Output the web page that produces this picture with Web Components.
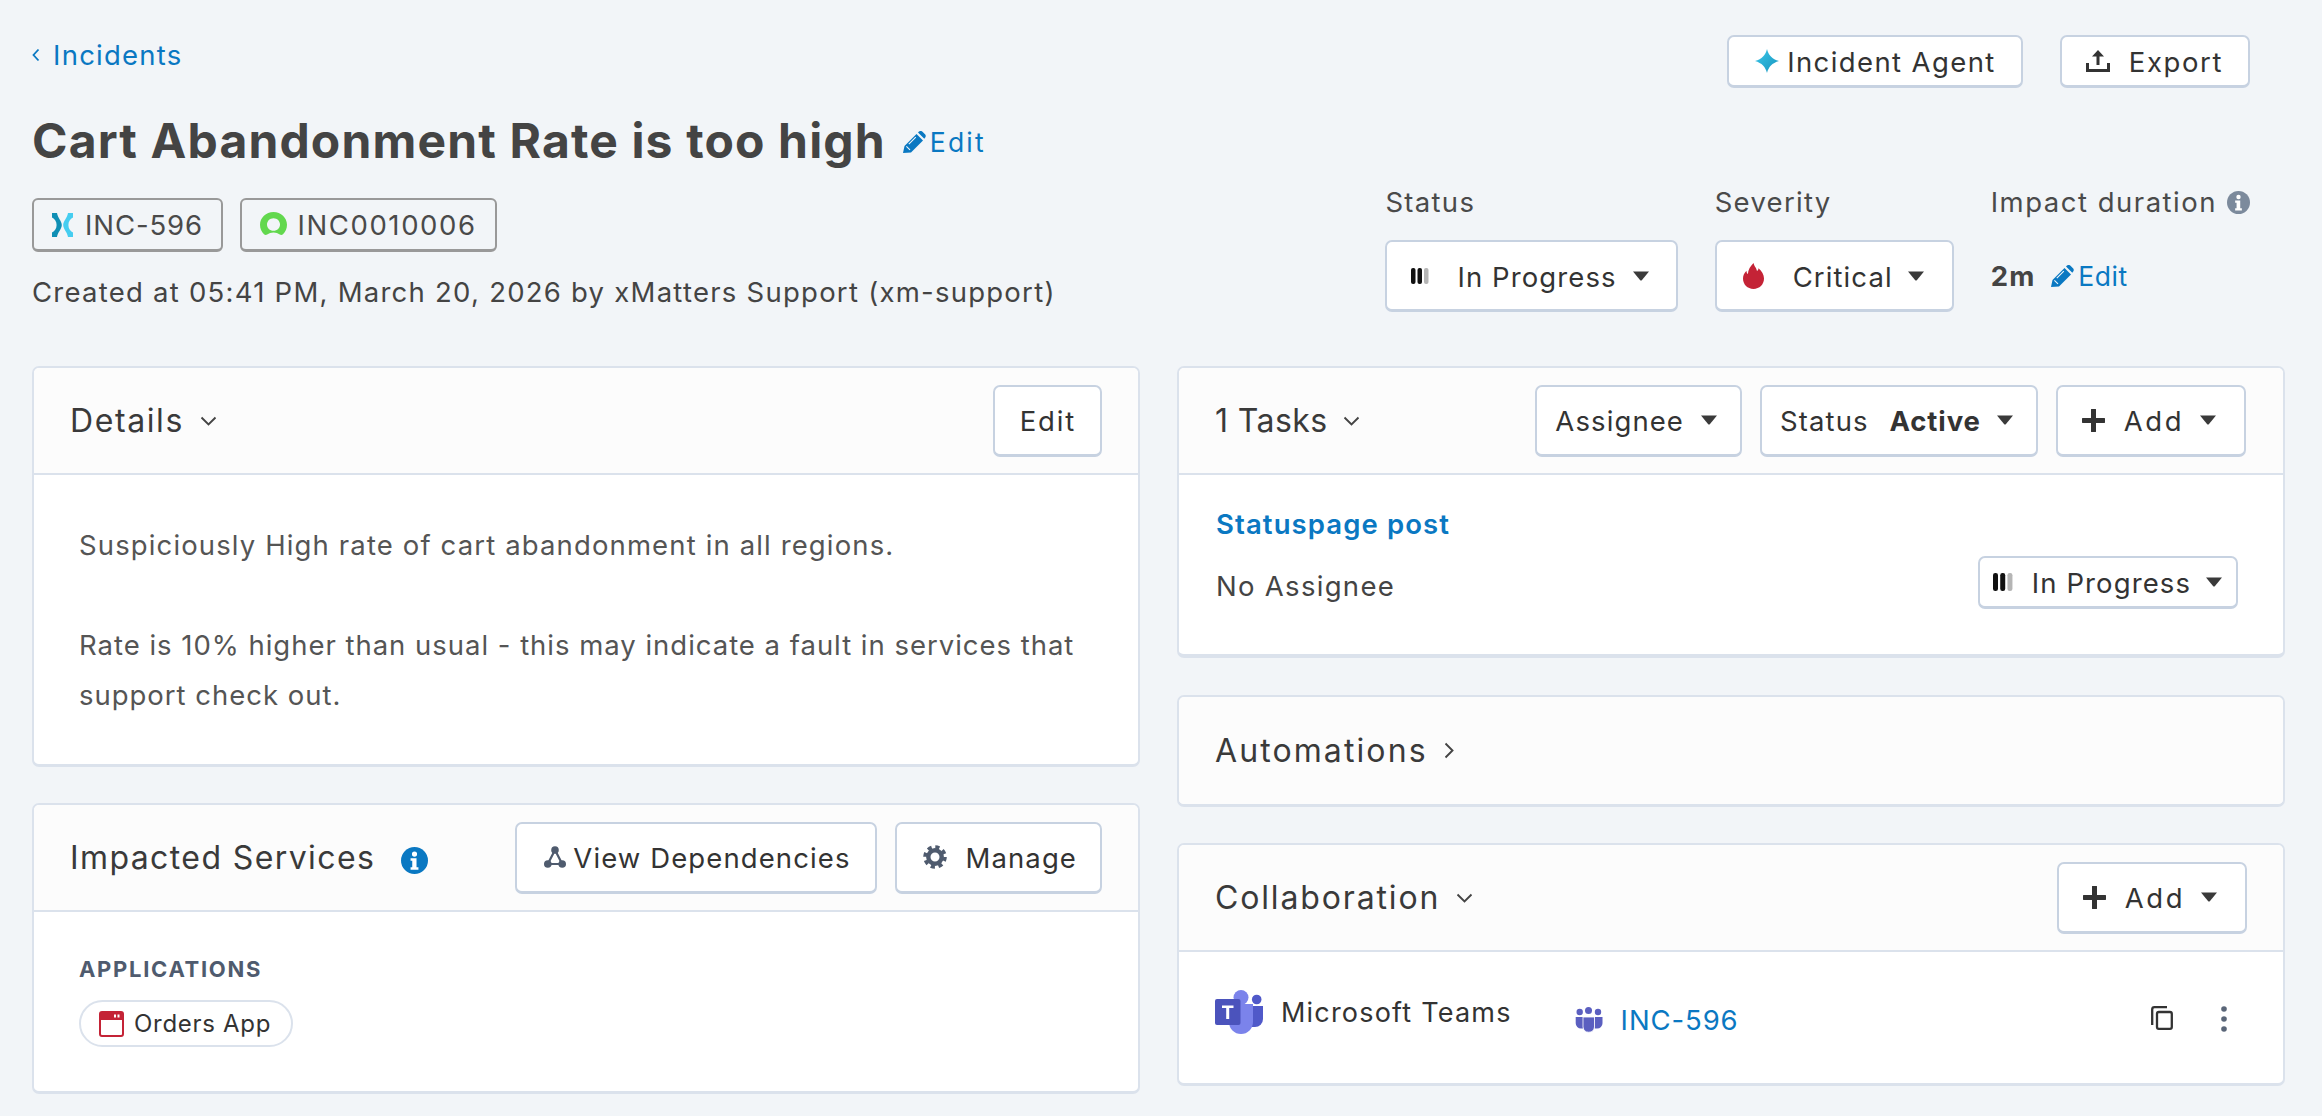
<!DOCTYPE html>
<html lang="en">
<head>
<meta charset="utf-8">
<title>Cart Abandonment Rate is too high</title>
<style>
  html, body { margin: 0; background: #f2f5f8; overflow: hidden; }
  body { font-family: Inter, "Liberation Sans", sans-serif; color: #444; letter-spacing: 1.1px; -webkit-font-smoothing: antialiased; }
</style>
</head>
<body>
<inc-page>
  <inc-back slot="top-left" href="#">Incidents</inc-back>
  <inc-title slot="top-left">Cart Abandonment Rate is too high</inc-title>
  <inc-refs slot="top-left">
    <inc-chip icon="xmatters" w="21" h="24" style="--ls:.9px">INC-596</inc-chip>
    <inc-chip icon="snow" w="27" h="25" style="--ls:1.6px;--gap:10px">INC0010006</inc-chip>
  </inc-refs>
  <inc-created slot="top-left">Created at 05:41 PM, March 20, 2026 by xMatters Support (xm-support)</inc-created>

  <inc-toolbar slot="top-right">
    <inc-btn h="53" icon="sparkle" iw="24" ih="24" style="--pad-l:26px;--pad-r:25px;--gap:8px;letter-spacing:1.4px">Incident Agent</inc-btn>
    <inc-btn h="53" icon="export" iw="24" ih="22" style="--pad-l:24px;--pad-r:25px;--gap:19px;letter-spacing:1.6px">Export</inc-btn>
  </inc-toolbar>
  <inc-fields slot="top-right">
    <inc-field label="Status"><inc-btn h="72" icon="progress" iw="18" ih="16" caret style="--pad-l:24px;--pad-r:27px;--gap:28px;--caret-gap:16px">In Progress</inc-btn></inc-field>
    <inc-field label="Severity"><inc-btn h="72" icon="flame" iw="21" ih="26" caret style="--pad-l:26px;--pad-r:28px;--gap:29px;--caret-gap:15px">Critical</inc-btn></inc-field>
    <inc-field label="Impact duration" info><inc-duration>2m</inc-duration></inc-field>
  </inc-fields>

  <inc-card slot="left" heading="Details" chevron="down" style="--ls:1.6px">
    <inc-btn slot="actions" h="72" style="--pad-l:25px;--pad-r:24px;letter-spacing:1.8px">Edit</inc-btn>
    <inc-description>
      <p>Suspiciously High rate of cart abandonment in all regions.</p>
      <p style="letter-spacing:.98px">Rate is 10% higher than usual - this may indicate a fault in services that support check out.</p>
    </inc-description>
  </inc-card>

  <inc-card slot="left" heading="Impacted Services" info>
    <inc-btn slot="actions" h="72" icon="deps" iw="22" ih="22" style="--pad-l:27px;--pad-r:24px;--gap:7px">View Dependencies</inc-btn>
    <inc-btn slot="actions" h="72" icon="gear" iw="24" ih="24" style="--pad-l:26px;--pad-r:23px;--gap:19px">Manage</inc-btn>
    <inc-services heading="APPLICATIONS"><inc-pill>Orders App</inc-pill></inc-services>
  </inc-card>

  <inc-card slot="right" heading="1 Tasks" chevron="down" style="--ls:.4px;--bb:4px">
    <inc-btn slot="actions" h="72" caret style="--pad-l:18px;--pad-r:23px;--caret-gap:17px">Assignee</inc-btn>
    <inc-btn slot="actions" h="72" caret style="--pad-l:18px;--pad-r:23px;--caret-gap:16px">Status <b style="margin-left:12px;font-weight:700;letter-spacing:.9px">Active</b></inc-btn>
    <inc-btn slot="actions" h="72" icon="plus" iw="23" ih="23" caret style="--pad-l:24px;--pad-r:28px;--gap:19px;--caret-gap:16px;margin-right:1px;letter-spacing:2.5px">Add</inc-btn>
    <inc-task name="Statuspage post" assignee="No Assignee">
      <inc-btn h="53" icon="progress" iw="20" ih="20" caret style="--pad-l:13px;--pad-r:14px;--gap:19px;--caret-gap:15px">In Progress</inc-btn>
    </inc-task>
  </inc-card>

  <inc-card slot="right" heading="Automations" chevron="right" collapsed style="--ls:2.1px"></inc-card>

  <inc-card slot="right" heading="Collaboration" chevron="down" style="--ls:1.85px">
    <inc-btn slot="actions" h="72" icon="plus" iw="23" ih="23" caret style="--pad-l:24px;--pad-r:28px;--gap:19px;--caret-gap:16px;letter-spacing:2.5px">Add</inc-btn>
    <inc-channel app="Microsoft Teams" name="INC-596"></inc-channel>
  </inc-card>
</inc-page>

<script>
const BLUE = '#0a78c2';

// every icon is a plain svg fragment, viewBox given with it
const ICONS = {
  back: ['0 0 8 14', '<path d="M6.5 1.5 1.5 7l5 5.5" fill="none" stroke="#0a78c2" stroke-width="1.8"/>'],
  down: ['0 0 17 10', '<path d="M1.5 1.5 8.5 8.5l7-7" fill="none" stroke="#444" stroke-width="1.9"/>'],
  right: ['0 0 10 17', '<path d="M1.5 1.5 8.5 8.5l-7 7" fill="none" stroke="#444" stroke-width="1.9"/>'],
  caret: ['0 0 16 10', '<path d="M0 .5h16L9 9a1.3 1.3 0 0 1-2 0z" fill="#3a3a3a"/>'],
  pencil: ['0 0 23 22', '<path fill="#0a78c2" d="M0 22l1.500-7L13.500 3 20 9.500l-12 12z"/><path fill="#0a78c2" d="M15 1.500l1-1c1-.8 2.500-.8 3.500.3l2.500 2.500c1 1 1 2.400 0 3.400l-.7 1.100z"/><path d="M3.400 15.300l3.600 3.600M5.800 13.200l7-7" stroke="#f2f5f8" stroke-width="1.100" fill="none"/>'],
  sparkle: ['0 0 24 24', '<defs><linearGradient id="g" x1="0" y1="0" x2="1" y2="1"><stop offset="0" stop-color="#3cc8ea"/><stop offset="1" stop-color="#1593bd"/></linearGradient></defs><path fill="url(#g)" d="M12 0C13.500 6 17 10 24 12 17 14 13.500 18 12 24 10.500 18 7 14 0 12 7 10 10.500 6 12 0z"/>'],
  export: ['0 0 24 22', '<path fill="#333" d="M12 0l6 6.500h-4.500V15h-3V6.500H6zM0 13h3v6h18v-6h3v9H0z"/>'],
  xmatters: ['0 0 21 24', '<path fill="#0f8fb5" d="M0 0h5C5.800 5 9.800 8 9.800 12S5.800 19 5 24H0v-4.500C2.800 18 4.600 15.500 4.600 12S2.800 6 0 4.500z"/><path fill="#45cdf0" d="M21 0h-5c-.8 5-4.800 8-4.800 12s4 7 4.800 12h5v-4.500c-2.800-1.500-4.600-4-4.600-7.500s1.800-6 4.600-7.500z"/>'],
  snow: ['0 0 27 25', '<path fill="#62d84e" fill-rule="evenodd" d="M13.500 0C21 0 27 5.700 27 12.800c0 3.700-1.500 7-4 9.400-.9.900-2.200 1-3.200.3-1.800-1.300-3.900-2-6.300-2s-4.500.7-6.300 2c-1 .7-2.300.6-3.200-.3-2.500-2.400-4-5.700-4-9.400C0 5.700 6 0 13.500 0zm0 6.200c-3.700 0-6.500 2.900-6.500 6.300 0 3.500 2.800 6.300 6.500 6.300s6.500-2.800 6.500-6.300c0-3.400-2.800-6.300-6.500-6.300z"/>'],
  progress: ['0 0 18 16', '<rect x="0" width="4.500" height="16" rx="2" fill="#111"/><rect x="6.500" width="4.500" height="16" rx="2" fill="#111"/><rect x="13" width="4.500" height="16" rx="2" fill="#b5b5b5"/>'],
  flame: ['0 0 21 26', '<path fill="#c42336" d="M10.500 0c1 4 3 4.800 3.500 8 .9-.5 1.400-1.500 1.500-2.800C18.800 8 21 11.700 21 15.600 21 21.500 16.500 26 10.500 26S0 21.500 0 15.600c0-3.100 1.300-5.500 3.500-7.800 0 1.500.4 2.600 1.400 3.300C5 6.800 7.500 3 10.500 0z"/>'],
  info: ['0 0 24 24', '<circle cx="12" cy="12" r="12" fill="currentColor"/><path fill="#fff" d="M10 10h3.800v8h1.700v2.300h-7V18h1.500v-5.700H8.500V10zM12 4a2.300 2.300 0 1 1 0 4.600A2.300 2.300 0 0 1 12 4z"/>'],
  deps: ['0 0 22 22', '<g fill="#4f5b6e"><circle cx="11" cy="4" r="3.800"/><circle cx="3.800" cy="18" r="3.800"/><circle cx="18.200" cy="18" r="3.800"/></g><path d="M11 4 3.800 18h14.400z" fill="none" stroke="#4f5b6e" stroke-width="2.200"/>'],
  gear: ['0 0 24 24', '<circle cx="12" cy="12" r="6.700" fill="none" stroke="#4f5b6e" stroke-width="4.400"/><circle cx="12" cy="12" r="10" fill="none" stroke="#4f5b6e" stroke-width="3.600" stroke-dasharray="4.200 3.654"/>'],
  plus: ['0 0 23 23', '<path d="M11.500 1v21M1 11.500h21" stroke="#333" stroke-width="5" stroke-linecap="round" fill="none"/>'],
  app: ['0 0 25 26', '<rect x="1" y="1" width="23" height="24" rx="2" fill="#fff" stroke="#c42336" stroke-width="2"/><path fill="#c42336" d="M1 3a2 2 0 0 1 2-2h19a2 2 0 0 1 2 2v6H1z"/><path fill="#fff" d="M15 3.500h2v3h-2zM18.500 3.500h2v3h-2z"/>'],
  teams: ['0 0 48 44', '<circle cx="41.700" cy="9.500" r="4.800" fill="#5059c9"/><path fill="#5059c9" d="M34 16h14v13a8 8 0 0 1-8 8h-6z"/><circle cx="26" cy="7.500" r="7.500" fill="#7b83eb"/><path fill="#7b83eb" d="M14 14h24v18a12 12 0 0 1-24 0z"/><rect y="9" width="25.500" height="26" rx="2" fill="#4b53bc"/><path fill="#fff" d="M7 15.500h11.500v2.600h-4.300V29h-3V18.100H7z"/>'],
  teamsSmall: ['0 0 28 26', '<g fill="#5b5fc0"><circle cx="4.700" cy="5" r="3.200"/><circle cx="23" cy="5" r="3.200"/><circle cx="13.500" cy="3.500" r="3.500"/><path d="M.7 10h7.800v11.500H6a5.300 5.300 0 0 1-5.300-5.300zM27.500 10h-7.800v11.500h2.500a5.300 5.300 0 0 0 5.300-5.300z"/><path d="M8 10h11.500v10a5.800 6 0 0 1-11.500 0z" stroke="#fff" stroke-width=".8"/></g>'],
  copy: ['0 0 22 24', '<path d="M16 1.200H3.500A2.300 2.300 0 0 0 1.200 3.500V19" fill="none" stroke="#333" stroke-width="2.300"/><rect x="6" y="6" width="14.800" height="16.800" rx="1.800" fill="none" stroke="#333" stroke-width="2.300"/>'],
  dots: ['0 0 6 26', '<g fill="#5a6678"><circle cx="3" cy="3" r="2.800"/><circle cx="3" cy="13" r="2.800"/><circle cx="3" cy="23" r="2.800"/></g>'],
};

// helper so each class below stays short
class Base extends HTMLElement {
  constructor(html) {
    super();
    this.attachShadow({ mode: 'open' });
    this.shadowRoot.innerHTML = html;
  }
}

function svg(name, w, h) {
  const [box, body] = ICONS[name];
  return `<svg xmlns="http://www.w3.org/2000/svg" viewBox="${box}" width="${w}" height="${h}" style="display:block;flex:none" aria-hidden="true">${body}</svg>`;
}

class IncPage extends Base {
  constructor() {
    super(`<style>
      :host { display: block; width: 2322px; height: 1116px; box-sizing: border-box; }
      .top { display: flex; justify-content: space-between; height: 366px; padding: 35px 72px 0 32px; box-sizing: border-box; }
      .tl, .tr { display: flex; flex-direction: column; }
      .main { display: grid; grid-template-columns: 1108px 1fr; gap: 37px; padding: 0 37px 0 32px; align-items: start; }
      .col { display: flex; flex-direction: column; }
      .l { gap: 36px; }
      .r { gap: 36.5px; }
    </style>
    <div class="top">
      <div class="tl"><slot name="top-left"></slot></div>
      <div class="tr"><slot name="top-right"></slot></div>
    </div>
    <div class="main">
      <div class="col l"><slot name="left"></slot></div>
      <div class="col r"><slot name="right"></slot></div>
    </div>`);
  }
}

class IncBack extends Base {
  constructor() {
    super(`<style>
      :host { display: block; }
      a { display: inline-flex; align-items: center; gap: 13px; height: 40px; color: ${BLUE}; text-decoration: none; font-size: 27.5px; letter-spacing: 1.25px; }
    </style>
    <a href="#">${svg('back', 8, 14)}<slot></slot></a>`);
  }
}

class IncTitle extends Base {
  constructor() {
    super(`<style>
      :host { display: flex; align-items: center; margin-top: 35px; height: 60px; padding-top: 2px; box-sizing: border-box; }
      h1 { margin: 0; font-size: 48px; font-weight: 700; color: #444; line-height: 60px; white-space: nowrap; letter-spacing: 1.15px; }
      a { display: inline-flex; align-items: center; gap: 4px; margin: 2px 0 0 17px; color: ${BLUE}; font-size: 26.5px; letter-spacing: 2.2px; text-decoration: none; }
    </style>
    <h1><slot></slot></h1><a href="#">${svg('pencil', 23, 22)}Edit</a>`);
  }
}

class IncRefs extends Base {
  constructor() {
    super(`<style>:host { display: flex; gap: 17.5px; margin-top: 28px; }</style><slot></slot>`);
  }
}

class IncChip extends Base {
  constructor() {
    super(`<style>
      :host { display: inline-flex; align-items: center; gap: var(--gap, 12px); height: 54px; box-sizing: border-box; padding: 0 18px; border: 2px solid #999; border-bottom-width: 3px; border-radius: 6px; font-size: 27.5px; letter-spacing: var(--ls, 1px); color: #4a4a4a; }
    </style><span id="i"></span><slot></slot>`);
  }
  connectedCallback() {
    const s = this.shadowRoot.getElementById('i');
    s.innerHTML = svg(this.getAttribute('icon'), this.getAttribute('w'), this.getAttribute('h'));
  }
}

class IncCreated extends Base {
  constructor() {
    super(`<style>:host { display: block; margin-top: 20px; line-height: 40px; font-size: 27.5px; letter-spacing: 1.25px; color: #444; white-space: nowrap; }</style><slot></slot>`);
  }
}

class IncToolbar extends Base {
  constructor() {
    super(`<style>:host { display: flex; justify-content: flex-end; gap: 37px; }</style><slot></slot>`);
  }
}

class IncFields extends Base {
  constructor() {
    super(`<style>:host { display: flex; gap: 37px; margin-top: 96px; }</style><slot></slot>`);
  }
}

class IncField extends Base {
  constructor() {
    super(`<style>
      :host { display: flex; flex-direction: column; gap: 20px; }
      .l { display: flex; align-items: center; gap: 10px; height: 36px; font-size: 27.5px; letter-spacing: 1.3px; color: #4a4a4a; white-space: nowrap; }
      :host([info]) .l { letter-spacing: 1.5px; }
      .l span { color: #7c8a9c; }
    </style><div class="l" id="l"></div><slot></slot>`);
  }
  connectedCallback() {
    const l = this.shadowRoot.getElementById('l');
    l.textContent = this.getAttribute('label');
    if (this.hasAttribute('info')) {
      const s = document.createElement('span');
      s.innerHTML = svg('info', 23, 23);
      l.appendChild(s);
    }
  }
}

class IncDuration extends Base {
  constructor() {
    super(`<style>
      :host { display: flex; align-items: center; height: 72px; font-size: 27.5px; color: #444; }
      b { font-weight: 700; margin-right: 16px; }
      a { display: inline-flex; align-items: center; gap: 4px; color: ${BLUE}; font-size: 26.5px; letter-spacing: .5px; text-decoration: none; }
    </style><b><slot></slot></b><a href="#">${svg('pencil', 23, 22)}Edit</a>`);
  }
}

class IncBtn extends Base {
  constructor() {
    super(`<style>
      :host { display: inline-flex; align-items: center; box-sizing: border-box; background: #fff; border: 2px solid #c7d2e1; border-bottom-width: 3px; border-radius: 7px;
        padding: 0 var(--pad-r, 24px) 0 var(--pad-l, 24px); font-size: 27.5px; color: #333; white-space: nowrap; }
      #i { margin-right: var(--gap, 10px); }
      #i:empty, #c:empty { display: none; }
      #c { margin-left: var(--caret-gap, 16px); }
      #t { padding-top: 2px; }
    </style><span id="i"></span><span id="t"><slot></slot></span><span id="c"></span>`);
  }
  connectedCallback() {
    this.style.height = this.getAttribute('h') + 'px';
    const name = this.getAttribute('icon');
    if (name) this.shadowRoot.getElementById('i').innerHTML = svg(name, this.getAttribute('iw'), this.getAttribute('ih'));
    if (this.hasAttribute('caret')) this.shadowRoot.getElementById('c').innerHTML = svg('caret', 16, 10);
  }
}

class IncCard extends Base {
  constructor() {
    super(`<style>
      :host { display: block; box-sizing: border-box; background: #fff; border: 2px solid #dbe2ec; border-bottom-width: var(--bb, 3px); border-radius: 7px; overflow: hidden; }
      header { display: flex; align-items: center; height: 107px; box-sizing: border-box; padding: 0 36px 0 36px; background: #fcfcfc; border-bottom: 2px solid #dbe2ec; }
      :host([collapsed]) header { border-bottom: 0; height: 107px; }
      :host([collapsed]) main { display: none; }
      h2 { margin: 0; font-size: 32px; font-weight: 400; letter-spacing: var(--ls, 1.4px); color: #3a3a3a; white-space: nowrap; }
      #after { margin-left: 16px; color: ${BLUE}; }
      .acts { margin-left: auto; display: flex; gap: 18px; }
    </style>
    <header><h2 id="t"></h2><span id="after"></span><div class="acts"><slot name="actions"></slot></div></header>
    <main><slot></slot></main>`);
  }
  connectedCallback() {
    this.shadowRoot.getElementById('t').textContent = this.getAttribute('heading');
    const after = this.shadowRoot.getElementById('after');
    const ch = this.getAttribute('chevron');
    if (ch === 'down') after.innerHTML = svg('down', 17, 10);
    if (ch === 'right') after.innerHTML = svg('right', 10, 17);
    if (this.hasAttribute('info')) {
      after.innerHTML = svg('info', 27, 27);
      after.style.marginLeft = '26px';
      after.style.marginTop = '6px';
    }
  }
}

class IncDescription extends Base {
  constructor() {
    super(`<style>
      :host { display: block; padding: 45px 40px 44px 45px; font-size: 27.5px; line-height: 50px; letter-spacing: 1.13px; color: #555; }
      ::slotted(p) { margin: 0 0 50px; }
      ::slotted(p:last-child) { margin: 0; }
    </style><slot></slot>`);
  }
}

class IncServices extends Base {
  constructor() {
    super(`<style>
      :host { display: block; padding: 42px 45px 44px; }
      h3 { margin: 0 0 16px; font-size: 22px; line-height: 30px; font-weight: 700; letter-spacing: 1.7px; color: #4f5b6e; }
      div { display: flex; }
    </style><h3 id="h"></h3><div><slot></slot></div>`);
  }
  connectedCallback() {
    this.shadowRoot.getElementById('h').textContent = this.getAttribute('heading');
  }
}

class IncPill extends Base {
  constructor() {
    super(`<style>
      :host { display: inline-flex; align-items: center; gap: 10px; height: 47px; box-sizing: border-box; padding: 0 20px 0 18px; border: 2px solid #dbe2ec; border-radius: 24px; font-size: 24px; letter-spacing: .7px; color: #333; }
    </style>${svg('app', 25, 26)}<slot></slot>`);
  }
}

class IncTask extends Base {
  constructor() {
    super(`<style>
      :host { display: block; padding: 31px 45px 45px 37px; }
      a { display: block; line-height: 36px; font-size: 27.5px; font-weight: 600; color: ${BLUE}; text-decoration: none; }
      .row { display: flex; justify-content: space-between; align-items: flex-start; margin-top: 14px; }
      .who { margin-top: 12px; line-height: 36px; font-size: 27.5px; letter-spacing: 1.3px; color: #444; }
    </style><a href="#" id="n"></a><div class="row"><div class="who" id="w"></div><slot></slot></div>`);
  }
  connectedCallback() {
    this.shadowRoot.getElementById('n').textContent = this.getAttribute('name');
    this.shadowRoot.getElementById('w').textContent = this.getAttribute('assignee');
  }
}

class IncChannel extends Base {
  constructor() {
    super(`<style>
      :host { display: flex; align-items: flex-start; height: 131px; box-sizing: border-box; padding: 38px 56px 0 36px; }
      .app { margin-left: 18px; line-height: 46px; font-size: 27px; letter-spacing: 1.2px; color: #333; white-space: nowrap; }
      .room { display: flex; align-items: center; gap: 18px; margin-left: 63px; margin-top: 13px; height: 34px; color: ${BLUE}; font-size: 27.5px; letter-spacing: .9px; text-decoration: none; }
      .tools { margin-left: auto; margin-top: 16px; display: flex; gap: 48px; }
    </style>
    ${svg('teams', 48, 44)}<span class="app" id="a"></span>
    <a class="room" href="#">${svg('teamsSmall', 28, 26)}<span id="n"></span></a>
    <div class="tools">${svg('copy', 22, 24)}${svg('dots', 6, 26)}</div>`);
  }
  connectedCallback() {
    this.shadowRoot.getElementById('a').textContent = this.getAttribute('app');
    this.shadowRoot.getElementById('n').textContent = this.getAttribute('name');
  }
}

customElements.define('inc-page', IncPage);
customElements.define('inc-back', IncBack);
customElements.define('inc-title', IncTitle);
customElements.define('inc-refs', IncRefs);
customElements.define('inc-chip', IncChip);
customElements.define('inc-created', IncCreated);
customElements.define('inc-toolbar', IncToolbar);
customElements.define('inc-fields', IncFields);
customElements.define('inc-field', IncField);
customElements.define('inc-duration', IncDuration);
customElements.define('inc-btn', IncBtn);
customElements.define('inc-card', IncCard);
customElements.define('inc-description', IncDescription);
customElements.define('inc-services', IncServices);
customElements.define('inc-pill', IncPill);
customElements.define('inc-task', IncTask);
customElements.define('inc-channel', IncChannel);
</script>
</body>
</html>
